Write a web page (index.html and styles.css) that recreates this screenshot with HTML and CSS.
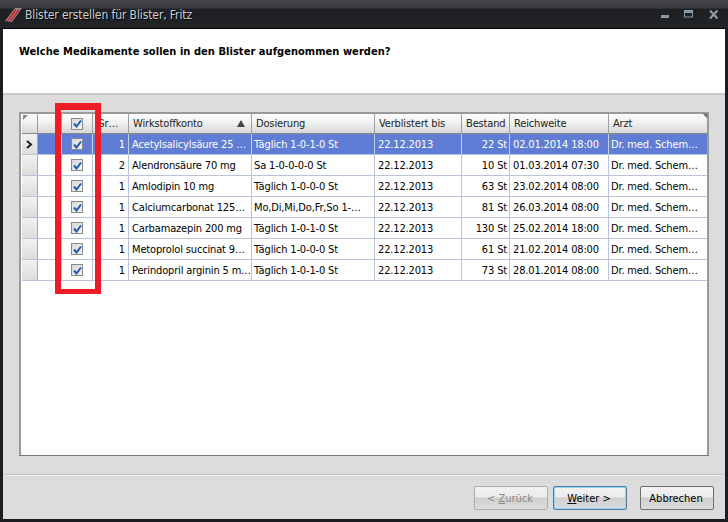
FILE: index.html
```html
<!DOCTYPE html>
<html lang="de">
<head>
<meta charset="utf-8">
<title>Blister erstellen</title>
<link rel="stylesheet" href="styles.css">
</head>
<body>
<div class="window">
  <div class="titlebar">
    <svg class="logo" width="17" height="16" viewBox="0 0 17 16">
      <path d="M0 14 L10 1 H17 L7 15 Z" fill="#8f8f8f"/>
      <path d="M2.5 14 L11 2.5 M5.5 14 L14 2.5" stroke="#d0202a" stroke-width="1.5" fill="none"/>
    </svg>
    <span class="title">Blister erstellen für Blister, Fritz</span>
    <div class="controls">
      <svg width="9" height="9" viewBox="0 0 9 9"><rect x="1" y="5" width="8" height="3" fill="#8a9aa8"/></svg>
      <svg width="10" height="9" viewBox="0 0 10 9"><rect x="0.5" y="0.5" width="8" height="6.5" fill="none" stroke="#8a9aa8"/><rect x="0.5" y="0.5" width="8" height="2.5" fill="#8a9aa8"/></svg>
      <svg width="10" height="9" viewBox="0 0 10 9"><path d="M1 0.5 L8.5 8.5 M8.5 0.5 L1 8.5" stroke="#8a9aa8" stroke-width="2.2"/></svg>
    </div>
  </div>
  <div class="client">
    <div class="header"><h1>Welche Medikamente sollen in den Blister aufgenommen werden?</h1></div>
    <div class="main">
      <div class="grid">
        <div class="row head">
          <div class="c c0 corner"></div><div class="c c1"></div>
          <div class="c c2"><span class="cb"><svg width="9" height="9" viewBox="0 0 9 9"><path d="M1 4.5 L3.5 7.5 L8 1.5" /></svg></span></div>
          <div class="c c3">Gr…</div>
          <div class="c c4 sort">Wirkstoffkonto<i class="arrow"></i></div>
          <div class="c c5">Dosierung</div><div class="c c6">Verblistert bis</div>
          <div class="c c7">Bestand</div><div class="c c8">Reichweite</div><div class="c c9 endcorner">Arzt</div>
        </div>
        <div class="row sel">
          <div class="c c0"><svg width="7" height="9" viewBox="0 0 7 9"><path d="M1 1 L5 4.5 L1 8" fill="none" stroke="#222" stroke-width="2"/></svg></div><div class="c c1"></div>
          <div class="c c2"><span class="cb"><svg width="9" height="9" viewBox="0 0 9 9"><path d="M1 4.5 L3.5 7.5 L8 1.5" /></svg></span></div>
          <div class="c c3 r">1</div><div class="c c4">Acetylsalicylsäure 25 …</div><div class="c c5">Täglich 1-0-1-0 St</div><div class="c c6">22.12.2013</div><div class="c c7 r">22 St</div><div class="c c8">02.01.2014 18:00</div><div class="c c9">Dr. med. Schem…</div>
        </div>
        <div class="row">
          <div class="c c0"></div><div class="c c1"></div>
          <div class="c c2"><span class="cb"><svg width="9" height="9" viewBox="0 0 9 9"><path d="M1 4.5 L3.5 7.5 L8 1.5" /></svg></span></div>
          <div class="c c3 r">2</div><div class="c c4">Alendronsäure 70 mg</div><div class="c c5">Sa 1-0-0-0-0 St</div><div class="c c6">22.12.2013</div><div class="c c7 r">10 St</div><div class="c c8">01.03.2014 07:30</div><div class="c c9">Dr. med. Schem…</div>
        </div>
        <div class="row">
          <div class="c c0"></div><div class="c c1"></div>
          <div class="c c2"><span class="cb"><svg width="9" height="9" viewBox="0 0 9 9"><path d="M1 4.5 L3.5 7.5 L8 1.5" /></svg></span></div>
          <div class="c c3 r">1</div><div class="c c4">Amlodipin 10 mg</div><div class="c c5">Täglich 1-0-0-0 St</div><div class="c c6">22.12.2013</div><div class="c c7 r">63 St</div><div class="c c8">23.02.2014 08:00</div><div class="c c9">Dr. med. Schem…</div>
        </div>
        <div class="row">
          <div class="c c0"></div><div class="c c1"></div>
          <div class="c c2"><span class="cb"><svg width="9" height="9" viewBox="0 0 9 9"><path d="M1 4.5 L3.5 7.5 L8 1.5" /></svg></span></div>
          <div class="c c3 r">1</div><div class="c c4">Calciumcarbonat 125…</div><div class="c c5">Mo,Di,Mi,Do,Fr,So 1-…</div><div class="c c6">22.12.2013</div><div class="c c7 r">81 St</div><div class="c c8">26.03.2014 08:00</div><div class="c c9">Dr. med. Schem…</div>
        </div>
        <div class="row">
          <div class="c c0"></div><div class="c c1"></div>
          <div class="c c2"><span class="cb"><svg width="9" height="9" viewBox="0 0 9 9"><path d="M1 4.5 L3.5 7.5 L8 1.5" /></svg></span></div>
          <div class="c c3 r">1</div><div class="c c4">Carbamazepin 200 mg</div><div class="c c5">Täglich 1-0-1-0 St</div><div class="c c6">22.12.2013</div><div class="c c7 r">130 St</div><div class="c c8">25.02.2014 18:00</div><div class="c c9">Dr. med. Schem…</div>
        </div>
        <div class="row">
          <div class="c c0"></div><div class="c c1"></div>
          <div class="c c2"><span class="cb"><svg width="9" height="9" viewBox="0 0 9 9"><path d="M1 4.5 L3.5 7.5 L8 1.5" /></svg></span></div>
          <div class="c c3 r">1</div><div class="c c4">Metoprolol succinat 9…</div><div class="c c5">Täglich 1-0-0-0 St</div><div class="c c6">22.12.2013</div><div class="c c7 r">61 St</div><div class="c c8">21.02.2014 08:00</div><div class="c c9">Dr. med. Schem…</div>
        </div>
        <div class="row">
          <div class="c c0"></div><div class="c c1"></div>
          <div class="c c2"><span class="cb"><svg width="9" height="9" viewBox="0 0 9 9"><path d="M1 4.5 L3.5 7.5 L8 1.5" /></svg></span></div>
          <div class="c c3 r">1</div><div class="c c4">Perindopril arginin 5 m…</div><div class="c c5">Täglich 1-0-1-0 St</div><div class="c c6">22.12.2013</div><div class="c c7 r">73 St</div><div class="c c8">28.01.2014 08:00</div><div class="c c9">Dr. med. Schem…</div>
        </div>
      </div>
    </div>
    <div class="footer">
      <button class="btn disabled">&lt; <u>Z</u>urück</button>
      <button class="btn primary"><u>W</u>eiter &gt;</button>
      <button class="btn last">Abbrechen</button>
    </div>
  </div>
  <div class="marker"></div>
</div>
</body>
</html>
```
FILE: styles.css
```css
* { box-sizing: border-box; }
html, body { margin: 0; padding: 0; }
body {
  width: 728px; height: 522px; overflow: hidden;
  font-family: "DejaVu Sans", sans-serif; font-stretch: condensed;
  font-size: 11px; color: #000;
}
.window {
  position: relative; width: 728px; height: 522px;
  background: #1c1d20; padding: 0 3px 3px;
  display: flex; flex-direction: column;
}
.titlebar {
  height: 28px; flex: none; margin: 0 -3px;
  display: flex; align-items: center; padding: 0 9px 0 5px;
  background: linear-gradient(#44464b 0, #3a3c41 8px, #1f2023 9px, #222327 100%);
  color: #c9ced2;
}
.logo { margin-right: 3px; margin-top: 2px; }
.title { font-size: 12px; letter-spacing: -0.1px; padding-top: 2px; text-shadow: 1px 1px 0 #000; }
.controls { margin-left: auto; display: flex; gap: 15px; align-items: center; }
.client {
  flex: 1; display: flex; flex-direction: column; background: #dcdcdc;
  border-top: 1px solid #000; min-height: 0;
}
.header {
  height: 66px; flex: none; background: #fff; padding: 16px 16px 0;
  border-bottom: 2px solid #c8c8c8;
}
h1 { margin: 0; font-size: 11px; font-weight: bold; line-height: 14px; letter-spacing: 0.05px; }
.main { flex: 1; padding: 17px 16px 18px; min-height: 0; }
.grid {
  height: 100%; background: #fff; border: 2px solid #9a9a9a; border-bottom: 1px solid #777;
  padding-left: 1px;
}
.row { display: flex; height: 21px; border-bottom: 1px solid #b9c4dc; letter-spacing: -0.15px; }
.c {
  flex: none; height: 100%; padding: 0 3px 0 2px; line-height: 22px; white-space: nowrap; overflow: hidden;
  border-right: 1px solid #b9c4dc;
}
.c0 { width: 16px; background: linear-gradient(#f2f2f2, #dcdcdc); border-right-color: #aaa; display: flex; align-items: center; justify-content: center; padding: 0; }
.c1 { width: 24px; }
.c2 { width: 31px; display: flex; align-items: center; justify-content: center; padding: 0; }
.c3 { width: 36px; }
.c4 { width: 123px; padding: 0 0 0 3px; }
.c5 { width: 123px; padding-right: 0; }
.c6 { width: 87px; padding-left: 3px; }
.c7 { width: 48px; padding-right: 2px; }
.c8 { width: 99px; padding-left: 3px; }
.c9 { width: 98px; border-right: 0; padding-right: 0; }
.r { text-align: right; }
.head { height: 20px; border-bottom: 1px solid #888; }
.head .c {
  background: linear-gradient(#fdfdfd 0, #f1f1f1 45%, #d6d6d6 100%);
  border-right-color: #9e9e9e; padding: 0 4px; line-height: 20px; color: #222;
}
.corner { position: relative; }
.corner::before {
  content: ""; position: absolute; left: 1px; top: 1px;
  border-top: 5px solid #888; border-right: 5px solid transparent;
}
.endcorner { position: relative; }
.endcorner::after {
  content: ""; position: absolute; right: 0; top: 0;
  border-top: 4px solid #666; border-left: 4px solid transparent;
}
.sort { position: relative; }
.arrow {
  position: absolute; right: 6px; top: 6px;
  border-left: 4px solid transparent; border-right: 4px solid transparent; border-bottom: 7px solid #444;
}
.sel { background: #5f7dd5; color: #fff; }
.sel .c { border-right-color: #c4cfe8; }
.sel .c0 { color: #000; border-right-color: #aaa; }
.cb {
  width: 12px; height: 12px; border: 1px solid #8a8a8a; background: linear-gradient(135deg, #d8d8d8, #f4f4f4);
  display: flex; align-items: center; justify-content: center;
}
.cb path { fill: none; stroke: #1f5bb5; stroke-width: 2; }
.footer {
  height: 45px; flex: none; border-top: 1px solid #c4c4c4; box-shadow: inset 0 1px 0 #eee;
  display: flex; align-items: flex-start; justify-content: flex-end; padding: 11px 11px 0 0;
}
.btn {
  width: 74px; height: 24px; margin-left: 5px; padding: 0 2px 0 0;
  font: inherit; font-stretch: condensed; color: #000;
  border: 1px solid #707070; border-radius: 2px;
  background: linear-gradient(#f2f2f2 0, #ebebeb 45%, #cfcfcf 50%, #dcdcdc 100%);
}
.btn.last { margin-left: 13px; }
.btn.disabled { color: #8a8a8a; border-color: #adadad; }
.btn.primary { border-color: #4f7e9e; box-shadow: inset 0 0 0 1px #8fd2f3; }
.marker {
  position: absolute; left: 55px; top: 103px; width: 46px; height: 191px;
  border: solid #ee1c25; border-width: 7px 6px 5px 6px;
}
```
